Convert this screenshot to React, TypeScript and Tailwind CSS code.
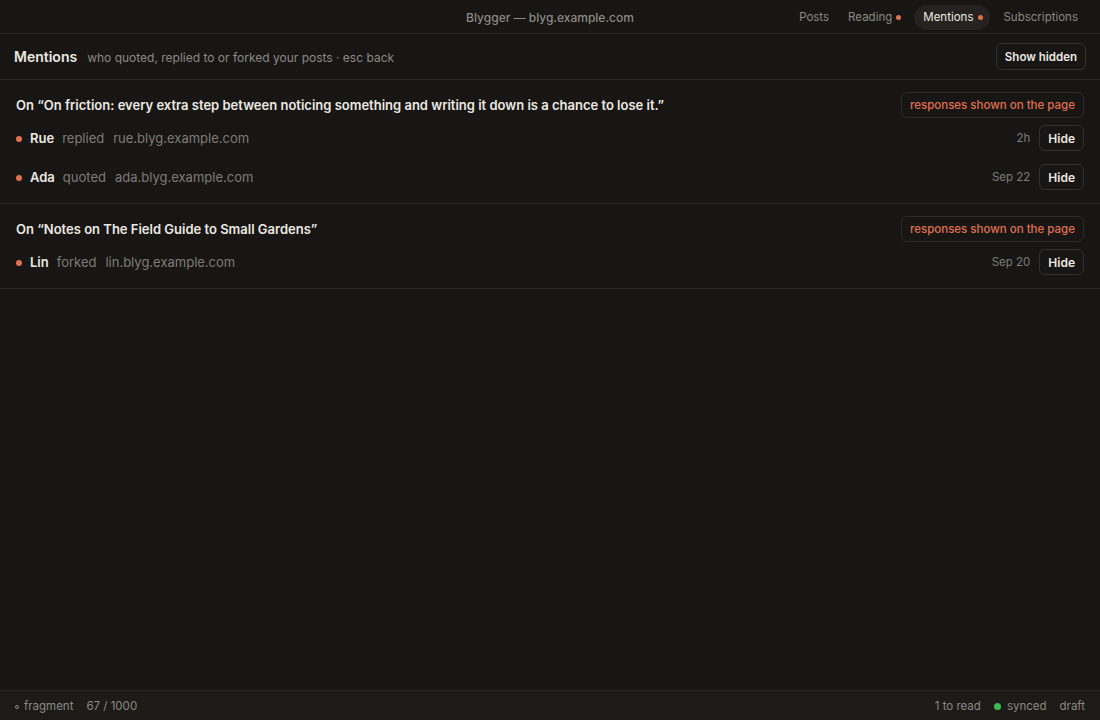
const font = { fontFamily: "Inter, 'Noto Sans', sans-serif" };

type Mention = { name: string; action: string; host: string; when: string };
type Group = { title: string; mentions: Mention[] };

const groups: Group[] = [
  {
    title:
      "On \u201cOn friction: every extra step between noticing something and writing it down is a chance to lose it.\u201d",
    mentions: [
      { name: "Rue", action: "replied", host: "rue.blyg.example.com", when: "2h" },
      { name: "Ada", action: "quoted", host: "ada.blyg.example.com", when: "Sep 22" },
    ],
  },
  {
    title: "On \u201cNotes on The Field Guide to Small Gardens\u201d",
    mentions: [{ name: "Lin", action: "forked", host: "lin.blyg.example.com", when: "Sep 20" }],
  },
];

function Dot({ className }: { className: string }) {
  return <span className={`inline-block rounded-full ${className}`} />;
}

function TopBar() {
  return (
    <div className="relative h-[34px] border-b border-[#2a2825] flex items-center justify-end pr-[12px]">
      <div className="absolute inset-0 flex items-center justify-center pointer-events-none pt-[2px]">
        <span className="text-[12px] font-medium text-[#8c8882]">Blygger — blyg.example.com</span>
      </div>
      <nav className="relative flex items-center gap-[3px] text-[11.5px] pt-[2px]">
        <span className="pl-[10px] pr-[6px] py-[4px] text-[#8c8882]">Posts</span>
        <span className="px-[10px] py-[4px] text-[#8c8882] flex items-center gap-[4px]">
          Reading <Dot className="w-[5px] h-[5px] bg-[#e0714f]" />
        </span>
        <span className="pl-[9px] pr-[7px] py-[4px] rounded-full bg-[#25231f] text-[#ece8e1] flex items-center gap-[5px]">
          Mentions <Dot className="w-[5px] h-[5px] bg-[#e0714f]" />
        </span>
        <span className="px-[10px] py-[4px] text-[#8c8882]">Subscriptions</span>
      </nav>
    </div>
  );
}

function Header() {
  return (
    <div className="h-[46px] border-b border-[#2a2825] flex items-center justify-between pl-[14px] pr-[14px]">
      <div className="flex items-baseline gap-[10px]">
        <h1 className="text-[14px] font-semibold text-[#ece8e1]">Mentions</h1>
        <span className="text-[12px] text-[#8c8882]">
          who quoted, replied to or forked your posts · esc back
        </span>
      </div>
      <button className="h-[27px] px-[8px] pt-[2px] rounded-md border border-[#34312d] text-[11.5px] font-semibold text-[#ece8e1]">
        Show hidden
      </button>
    </div>
  );
}

function MentionGroup({ group }: { group: Group }) {
  return (
    <section className="border-b border-[#2a2825] pl-4 pr-4 pt-3 pb-[13px]">
      <div className="flex items-center justify-between h-[26px]">
        <h2 className="text-[13px] font-semibold text-[#ece8e1] pt-[1px]">{group.title}</h2>
        <span className="h-[26px] px-[8px] pt-[1px] flex items-center rounded-md border border-[#2f2c28] text-[11.5px] font-medium text-[#e0714f]">
          responses shown on the page
        </span>
      </div>
      <div className="mt-[7px] flex flex-col gap-[13px]">
        {group.mentions.map((m) => (
          <div key={m.name} className="flex items-center justify-between h-[26px]">
            <div className="flex items-center text-[13px] pt-[1px]">
              <Dot className="w-[6px] h-[6px] bg-[#e0714f] mr-[8px]" />
              <span className="font-semibold text-[#ece8e1]">{m.name}</span>
              <span className="ml-[8px] text-[#7f7b75]">{m.action}</span>
              <span className="ml-[9px] text-[#7f7b75]">{m.host}</span>
            </div>
            <div className="flex items-center gap-[9px]">
              <span className="text-[11.5px] text-[#7f7b75] pt-[1px]">{m.when}</span>
              <button className="h-[26px] px-[8px] pt-[1px] rounded-md border border-[#34312d] text-[12px] font-semibold text-[#ece8e1]">
                Hide
              </button>
            </div>
          </div>
        ))}
      </div>
    </section>
  );
}

function Footer() {
  return (
    <div className="h-[30px] border-t border-[#2a2825] bg-[#1c1b18] flex items-center justify-between pl-[15px] pr-[15px] pt-[2px] text-[11.5px] text-[#8c8882]">
      <div className="flex items-center gap-[13px]">
        <span className="flex items-center gap-[5px]">
          <span className="inline-block w-[4px] h-[4px] rounded-full border border-[#8c8882]" />
          fragment
        </span>
        <span>67 / 1000</span>
      </div>
      <div className="flex items-center gap-[13px]">
        <span>1 to read</span>
        <span className="flex items-center gap-[6px]">
          <Dot className="bg-[#3fb950] w-[7px] h-[7px]" />
          synced
        </span>
        <span>draft</span>
      </div>
    </div>
  );
}

export default function App() {
  return (
    <div style={font} className="h-[720px] w-full bg-[#171614] flex flex-col overflow-hidden">
      <TopBar />
      <Header />
      <main className="flex-1">
        {groups.map((g) => (
          <MentionGroup key={g.title} group={g} />
        ))}
      </main>
      <Footer />
    </div>
  );
}
